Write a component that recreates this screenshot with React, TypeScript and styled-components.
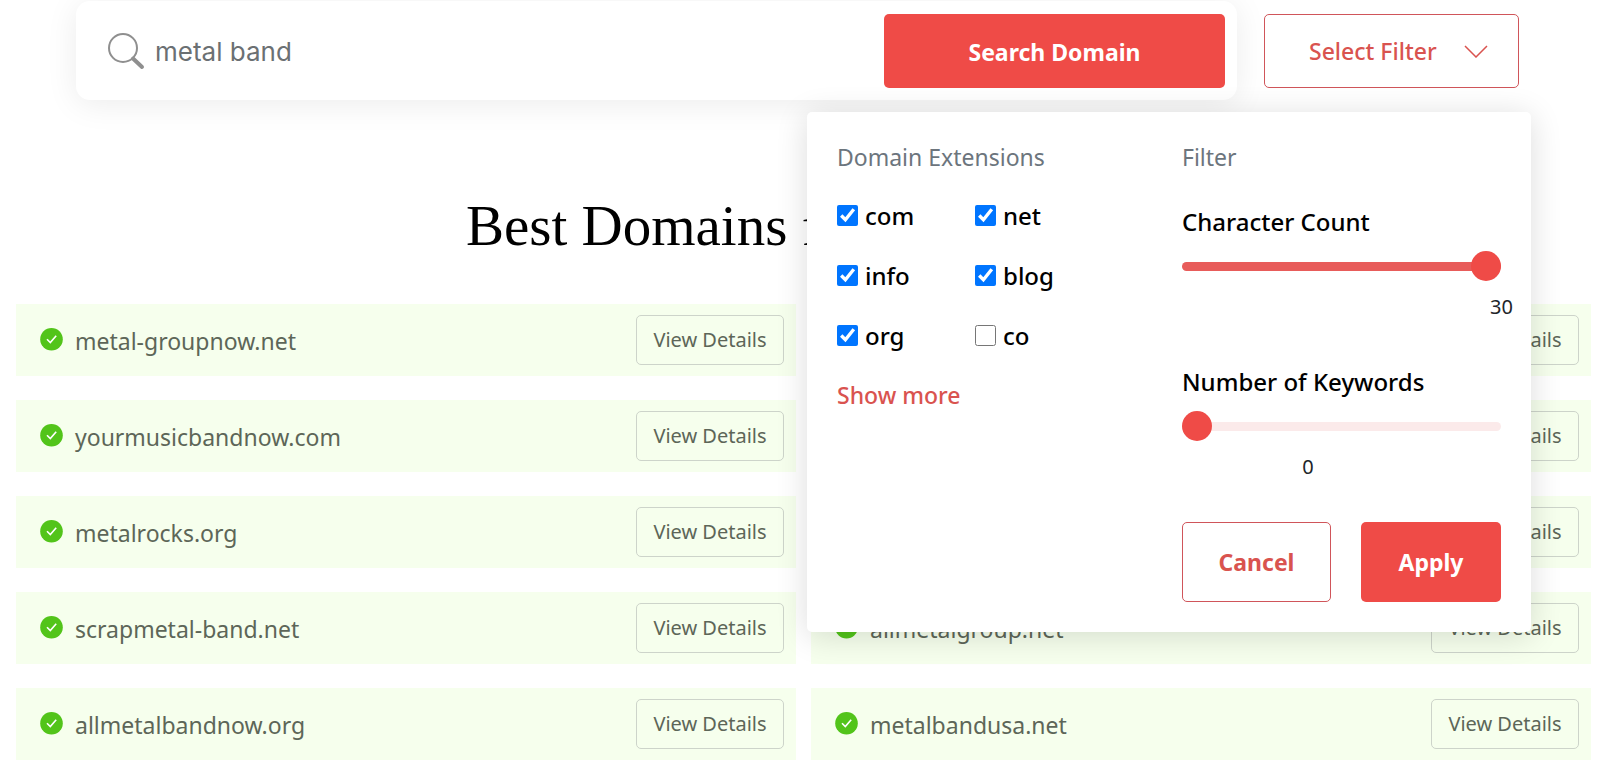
import React, { useState } from "react";
import styled, { createGlobalStyle } from "styled-components";

const GlobalStyle = createGlobalStyle`
  * { box-sizing: border-box; }
  body {
    margin: 0;
    background: #fff;
    color: #000;
    font-family: "Noto Sans", "Open Sans", sans-serif;
    font-size: 23px;
    line-height: 32px;
  }
  button, input { font: inherit; }
  button { cursor: pointer; }
`;

const Page = styled.div`
  padding-top: 1px;
  overflow: hidden;
`;

const Header = styled.header`
  display: flex;
  align-items: center;
  gap: 27px;
  padding: 0 85px 0 76px;
`;

const SearchCard = styled.form`
  flex: 1;
  min-width: 0;
  display: flex;
  align-items: center;
  gap: 10px;
  padding: 13px 12px 12px 32px;
  border-radius: 14px;
  background: #fff;
  box-shadow: 0 4px 32px rgba(0, 0, 0, 0.08);
`;

const SearchInput = styled.input`
  flex: 1;
  min-width: 0;
  padding: 1px 0 0;
  border: 0;
  outline: 0;
  background: transparent;
  color: #6b7073;
  font-family: Inter, sans-serif;
  font-size: 26px;
`;

const SolidButton = styled.button<{ $width: number; $height: number }>`
  width: ${(p) => p.$width}px;
  height: ${(p) => p.$height}px;
  padding: 1px 0 0;
  border: 0;
  border-radius: 5px;
  background: #ef4b47;
  color: #fff;
  font-weight: 700;
`;

const OutlineButton = styled.button<{ $width: number; $height: number }>`
  width: ${(p) => p.$width}px;
  height: ${(p) => p.$height}px;
  padding: 1px 0 0;
  border: 1px solid #d0555a;
  border-radius: 5px;
  background: #fff;
  color: #d9534f;
  font-weight: 700;
`;

const FilterToggle = styled(OutlineButton)`
  display: flex;
  align-items: center;
  justify-content: space-between;
  padding: 0 30px 0 44px;
  font-weight: 500;
`;

const FilterMenu = styled.div`
  position: relative;
`;

const FilterPanel = styled.section`
  position: absolute;
  z-index: 2;
  top: calc(100% + 24px);
  right: -12px;
  width: 724px;
  display: flex;
  justify-content: space-between;
  padding: 29px 30px 30px;
  border-radius: 5px;
  background: #fff;
  box-shadow: 0 4px 32px rgba(0, 0, 0, 0.14);
`;

const PanelHeading = styled.h2`
  margin: 0;
  color: #6c757d;
  font-size: 23px;
  font-weight: 400;
`;

const ExtensionGrid = styled.div`
  display: grid;
  grid-template-columns: 138px 138px;
  row-gap: 28px;
  padding: 27px 0;
`;

const ExtensionLabel = styled.label`
  display: flex;
  align-items: center;
  gap: 7px;
  height: 32px;
  font-size: 24px;
  font-weight: 500;
`;

const Checkbox = styled.input`
  width: 21px;
  height: 21px;
  margin: 0;
`;

const ShowMore = styled.a`
  display: block;
  color: #d9534f;
  font-weight: 500;
  text-decoration: none;
`;

const FilterColumn = styled.div`
  width: 319px;
`;

const SliderGroup = styled.div<{ $gap: number }>`
  display: flex;
  flex-direction: column;
  padding-top: ${(p) => p.$gap}px;
`;

const SliderLabel = styled.label`
  font-size: 24px;
  font-weight: 500;
  white-space: nowrap;
`;

const Slider = styled.input`
  appearance: none;
  width: 100%;
  height: 30px;
  margin: 14px 0 9px;
  background: transparent;

  &::-webkit-slider-runnable-track {
    height: 9px;
    border-radius: 5px;
    background: linear-gradient(#e85c5a, #e85c5a) left / var(--fill) 100% no-repeat #fbeaea;
  }

  &::-webkit-slider-thumb {
    appearance: none;
    width: 30px;
    height: 30px;
    margin-top: -11px;
    border-radius: 50%;
    background: #ef4b47;
  }
`;

const SliderValue = styled.output<{ $atEnd?: boolean }>`
  width: ${(p) => (p.$atEnd ? "auto" : "252px")};
  margin-right: ${(p) => (p.$atEnd ? "-12px" : "0")};
  text-align: ${(p) => (p.$atEnd ? "right" : "center")};
  color: #212529;
  font-size: 20px;
`;

const PanelActions = styled.div`
  display: flex;
  justify-content: space-between;
  padding-top: 39px;
`;

const Title = styled.h1`
  margin: 0;
  padding: 94px 4px 46px 0;
  text-align: center;
  font-family: "Liberation Serif", serif;
  font-size: 57px;
  font-weight: 400;
  line-height: 64px;
`;

const Results = styled.ul`
  display: grid;
  grid-template-columns: 1fr 1fr;
  gap: 24px 15px;
  margin: 0;
  padding: 0 13px 19px 16px;
  list-style: none;
`;

const ResultRow = styled.li`
  display: flex;
  align-items: center;
  gap: 12px;
  height: 72px;
  padding: 0 12px 0 24px;
  background: #f6ffed;
`;

const DomainName = styled.span`
  flex: 1;
  min-width: 0;
  padding-top: 1px;
  color: #5d6658;
`;

const DetailsButton = styled.button`
  width: 148px;
  height: 50px;
  padding: 0;
  border: 1px solid #cdd4ca;
  border-radius: 5px;
  background: transparent;
  color: #5d6658;
  font-size: 20px;
`;

const SearchIcon = () => (
  <svg width="37" height="37" viewBox="0 0 37 37" fill="none" stroke="#8f8f8f" aria-hidden="true">
    <circle cx="15" cy="15" r="14" strokeWidth="2" />
    <path d="M25 25.5 34 34" strokeWidth="4" strokeLinecap="round" />
  </svg>
);

const ChevronIcon = () => (
  <svg width="24" height="14" viewBox="0 0 24 14" fill="none" stroke="#d9534f" aria-hidden="true">
    <path d="M1 2 12 13 23 2" strokeWidth="1.5" />
  </svg>
);

const CheckIcon = () => (
  <svg width="23" height="24" viewBox="0 0 23 24" fill="none" aria-hidden="true">
    <circle cx="11.5" cy="11.3" r="11.3" fill="#52c41a" />
    <path d="M7 11.2 10.3 14.5 16.2 7.7" stroke="#fff" strokeWidth="1.6" />
  </svg>
);

const domains = [
  "metal-groupnow.net",
  "metalbandhub.com",
  "yourmusicbandnow.com",
  "metalgroup.info",
  "metalrocks.org",
  "mymetalband.net",
  "scrapmetal-band.net",
  "allmetalgroup.net",
  "allmetalbandnow.org",
  "metalbandusa.net",
];

const extensions = ["com", "net", "info", "blog", "org", "co"];

export default function App() {
  const [query, setQuery] = useState("metal band");
  const [characters, setCharacters] = useState(30);
  const [keywords, setKeywords] = useState(0);
  const fill = (value: number, max: number) =>
    ({ "--fill": `${(value / max) * 100}%` }) as React.CSSProperties;

  return (
    <Page>
      <GlobalStyle />
      <Header>
        <SearchCard onSubmit={(e) => e.preventDefault()}>
          <SearchIcon />
          <SearchInput aria-label="Search domains" value={query} onChange={(e) => setQuery(e.target.value)} />
          <SolidButton $width={341} $height={74}>Search Domain</SolidButton>
        </SearchCard>
        <FilterMenu>
          <FilterToggle type="button" $width={255} $height={74} aria-expanded="true">
            Select Filter
            <ChevronIcon />
          </FilterToggle>
          <FilterPanel>
            <div>
              <PanelHeading>Domain Extensions</PanelHeading>
              <ExtensionGrid>
                {extensions.map((name) => (
                  <ExtensionLabel key={name}>
                    <Checkbox type="checkbox" defaultChecked={name !== "co"} />
                    {name}
                  </ExtensionLabel>
                ))}
              </ExtensionGrid>
              <ShowMore href="#more">Show more</ShowMore>
            </div>
            <FilterColumn>
              <PanelHeading>Filter</PanelHeading>
              <SliderGroup $gap={33}>
                <SliderLabel htmlFor="characters">Character Count</SliderLabel>
                <Slider
                  id="characters"
                  type="range"
                  min={0}
                  max={30}
                  value={characters}
                  style={fill(characters, 30)}
                  onChange={(e) => setCharacters(Number(e.target.value))}
                />
                <SliderValue htmlFor="characters" $atEnd>{characters}</SliderValue>
              </SliderGroup>
              <SliderGroup $gap={43}>
                <SliderLabel htmlFor="keywords">Number of Keywords</SliderLabel>
                <Slider
                  id="keywords"
                  type="range"
                  min={0}
                  max={10}
                  value={keywords}
                  style={fill(keywords, 10)}
                  onChange={(e) => setKeywords(Number(e.target.value))}
                />
                <SliderValue htmlFor="keywords">{keywords}</SliderValue>
              </SliderGroup>
              <PanelActions>
                <OutlineButton type="button" $width={149} $height={80}>Cancel</OutlineButton>
                <SolidButton type="button" $width={140} $height={80}>Apply</SolidButton>
              </PanelActions>
            </FilterColumn>
          </FilterPanel>
        </FilterMenu>
      </Header>
      <main>
        <Title>Best Domains for metal band</Title>
        <Results>
          {domains.map((name) => (
            <ResultRow key={name}>
              <CheckIcon />
              <DomainName>{name}</DomainName>
              <DetailsButton type="button">View Details</DetailsButton>
            </ResultRow>
          ))}
        </Results>
      </main>
    </Page>
  );
}
